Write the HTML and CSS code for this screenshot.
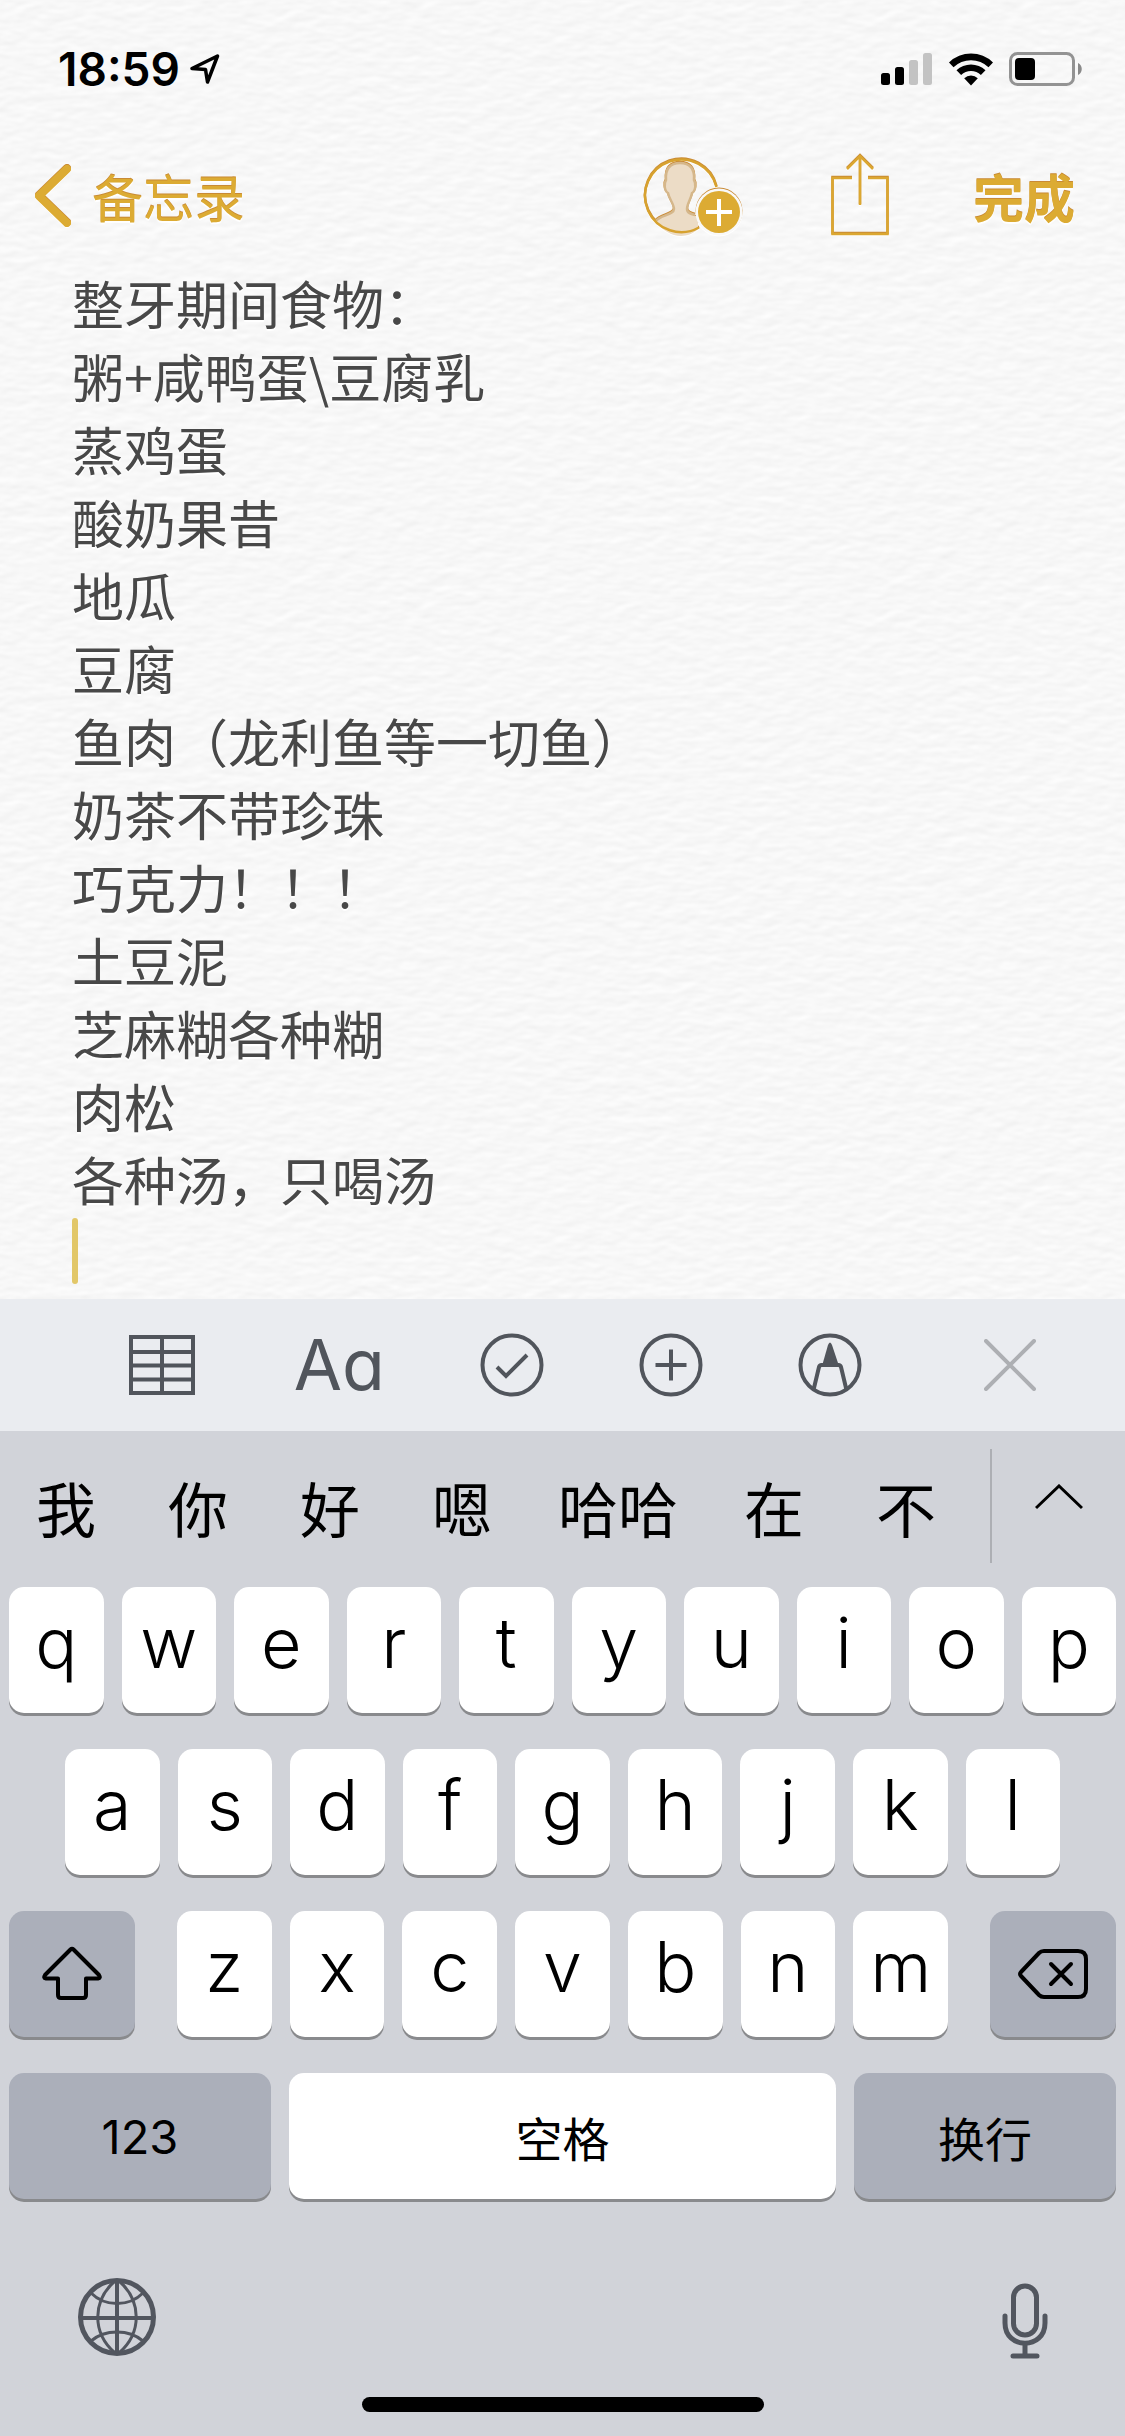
FILE: index.html
```html
<!DOCTYPE html>
<html lang="zh-CN">
<head>
    <meta charset="UTF-8">
    <meta name="viewport" content="width=device-width, initial-scale=1.0">
    <title>备忘录</title>
    <link rel="stylesheet" href="styles.css">
</head>
<body>
    <div class="screen">
        <main class="paper">
            <div class="status-bar">
                <div class="status-left">
                    <span class="time">18:59</span>
                    <svg class="location" width="30" height="30" viewBox="0 0 30 30" aria-hidden="true">
                        <path d="M2 14.5 27.500 2 17.500 28 15.500 15.500Z" fill="none" stroke="#000" stroke-width="3.500" stroke-linejoin="round"/>
                    </svg>
                </div>
                <div class="status-right">
                    <svg width="52" height="34" viewBox="0 0 52 34" aria-hidden="true">
                        <rect x="0" y="21" width="9" height="12" rx="2.500"/>
                        <rect x="14" y="15" width="9" height="18" rx="2.500"/>
                        <rect x="28" y="8" width="9" height="25" rx="2.500" fill="#c3c3c3"/>
                        <rect x="42" y="1" width="9" height="32" rx="2.500" fill="#c3c3c3"/>
                    </svg>
                    <svg width="46" height="34" viewBox="0 0 46 34" aria-hidden="true">
                        <path d="M1 10.500a31.500 31.500 0 0 1 44 0l-4.500 4.800a25 25 0 0 0-35 0z"/>
                        <path d="M8.500 18.300a21 21 0 0 1 29 0l-4.600 4.700a14.500 14.500 0 0 0-19.800 0z"/>
                        <path d="M16.200 26.200a10 10 0 0 1 13.600 0L23 33.500z"/>
                    </svg>
                    <svg width="74" height="34" viewBox="0 0 74 34" aria-hidden="true">
                        <rect x="1.500" y="1.500" width="63" height="31" rx="7" fill="none" stroke="#939393" stroke-width="3"/>
                        <rect x="6" y="6" width="20" height="22" rx="4"/>
                        <path d="M69 11c5 2 5 10 0 12z" fill="#8a8a8a"/>
                    </svg>
                </div>
            </div>

            <header class="nav-bar">
                <a class="back-link" href="#">
                    <svg class="gold-icon" width="38" height="64" viewBox="0 0 38 64" aria-hidden="true">
                        <path d="M33 5 5 32l28 27" fill="none" stroke="#dcab33" stroke-width="8" stroke-linecap="round" stroke-linejoin="round"/>
                    </svg>
                    备忘录
                </a>
                <div class="nav-actions">
                    <button class="icon-button" type="button" aria-label="添加成员">
                        <svg class="gold-icon" width="104" height="84" viewBox="0 0 104 84" aria-hidden="true">
                            <path d="M13 67c4-6 18-6 18-12 0-5-5-10-6-16-4-2-4-10-2-13-1-11 4-17 14-17s15 6 14 17c2 3 2 11-2 13-1 6-5 11-5 16 0 6 8 6 11 8v12c-12 12-32 8-42-8z" fill="#ecdcc6"/>
                            <path d="M13 67c4-6 18-6 18-12 0-5-5-10-6-16-4-2-4-10-2-13-1-11 4-17 14-17s15 6 14 17c2 3 2 11-2 13-1 6-5 11-5 16 0 4 4 5 8 6" fill="none" stroke="#d5b78b" stroke-width="2.500"/>
                            <path d="M73.500 33A36.300 36.300 0 1 0 56 73.500" fill="none" stroke="#d7a22f" stroke-width="2.500"/>
                            <circle cx="76" cy="58" r="23.500" fill="#f9f9f9"/>
                            <circle cx="76" cy="58" r="21" fill="#dcab33"/>
                            <path d="M63 58h26M76 45v27" stroke="#fff" stroke-width="4"/>
                        </svg>
                    </button>
                    <button class="icon-button" type="button" aria-label="共享">
                        <svg class="gold-icon" width="58" height="84" viewBox="0 0 58 84" aria-hidden="true">
                            <path d="M21 24H1.500v56h55V24H37M29 2v49M16 15 29 2l13 13" fill="none" stroke="#dba731" stroke-width="2.500"/>
                        </svg>
                    </button>
                    <button class="done-button" type="button">完成</button>
                </div>
            </header>

            <textarea class="note-text" rows="13" aria-label="备忘录正文" spellcheck="false">整牙期间食物：
粥+咸鸭蛋\豆腐乳
蒸鸡蛋
酸奶果昔
地瓜
豆腐
鱼肉（龙利鱼等一切鱼）
奶茶不带珍珠
巧克力！！！
土豆泥
芝麻糊各种糊
肉松
各种汤，只喝汤</textarea>
            <div class="caret"></div>
        </main>

        <div class="toolbar">
            <div class="tools">
                <button class="icon-button" type="button" aria-label="表格">
                    <svg width="66" height="60" viewBox="0 0 66 60" fill="none" stroke="#51555c" stroke-width="4" aria-hidden="true">
                        <path d="M2 2h62v56H2zM33 2v56M2 17h62M2 30.500h62M2 44.500h62"/>
                    </svg>
                </button>
                <button class="format-button" type="button" aria-label="格式">Aa</button>
                <button class="icon-button" type="button" aria-label="核对清单">
                    <svg width="64" height="64" viewBox="0 0 64 64" fill="none" stroke="#51555c" stroke-width="4" aria-hidden="true">
                        <circle cx="32" cy="32" r="29.500"/>
                        <path d="M17 34l9 9 21-21"/>
                    </svg>
                </button>
                <button class="icon-button" type="button" aria-label="添加">
                    <svg width="64" height="64" viewBox="0 0 64 64" fill="none" stroke="#51555c" stroke-width="4" aria-hidden="true">
                        <circle cx="32" cy="32" r="29.500"/>
                        <path d="M16.500 32h31M32 16.500v31"/>
                    </svg>
                </button>
                <button class="icon-button" type="button" aria-label="标记">
                    <svg width="64" height="64" viewBox="0 0 64 64" fill="none" stroke="#51555c" stroke-width="4" aria-hidden="true">
                        <circle cx="32" cy="32" r="29.500"/>
                        <path d="M15.500 57 21 34q.500-2 2.500-2h17q2 0 2.500 2l5.500 23"/>
                        <path d="M24 33l6-21q2-5 4 0l7 21z" fill="#51555c" stroke="none"/>
                    </svg>
                </button>
            </div>
            <button class="icon-button" type="button" aria-label="关闭">
                <svg width="52" height="52" viewBox="0 0 52 52" aria-hidden="true">
                    <path d="M2 2l48 48M50 2 2 50" stroke="#adafb3" stroke-width="4" stroke-linecap="round"/>
                </svg>
            </button>
        </div>

        <div class="keyboard">
            <div class="candidates">
                <button class="candidate" type="button">我</button>
                <button class="candidate" type="button">你</button>
                <button class="candidate" type="button">好</button>
                <button class="candidate" type="button">嗯</button>
                <button class="candidate candidate-wide" type="button">哈哈</button>
                <button class="candidate" type="button">在</button>
                <button class="candidate" type="button">不</button>
                <button class="expand" type="button" aria-label="更多候选">
                    <svg width="48" height="26" viewBox="0 0 48 26" aria-hidden="true">
                        <path d="M1 24 24 2l23 22" fill="none" stroke="#000" stroke-width="3"/>
                    </svg>
                </button>
            </div>

            <div class="keys">
                <div class="key-row">
                    <button class="key" type="button">q</button>
                    <button class="key" type="button">w</button>
                    <button class="key" type="button">e</button>
                    <button class="key" type="button">r</button>
                    <button class="key" type="button">t</button>
                    <button class="key" type="button">y</button>
                    <button class="key" type="button">u</button>
                    <button class="key" type="button">i</button>
                    <button class="key" type="button">o</button>
                    <button class="key" type="button">p</button>
                </div>
                <div class="key-row key-row-inset">
                    <button class="key" type="button">a</button>
                    <button class="key" type="button">s</button>
                    <button class="key" type="button">d</button>
                    <button class="key" type="button">f</button>
                    <button class="key" type="button">g</button>
                    <button class="key" type="button">h</button>
                    <button class="key" type="button">j</button>
                    <button class="key" type="button">k</button>
                    <button class="key" type="button">l</button>
                </div>
                <div class="key-row key-row-shift">
                    <button class="key key-dark key-side" type="button" aria-label="大写">
                        <svg width="60" height="56" viewBox="0 0 60 56" aria-hidden="true">
                            <path d="M28.500 3.500q1.500-1.500 3 0L57 29q2 3-1 3.500H44V49q0 3-3 3H19q-3 0-3-3V32.500H4q-3-.500-1-3.500z" fill="none" stroke="#000" stroke-width="4" stroke-linejoin="round"/>
                        </svg>
                    </button>
                    <div class="key-row key-row-letters">
                        <button class="key" type="button">z</button>
                        <button class="key" type="button">x</button>
                        <button class="key" type="button">c</button>
                        <button class="key" type="button">v</button>
                        <button class="key" type="button">b</button>
                        <button class="key" type="button">n</button>
                        <button class="key" type="button">m</button>
                    </div>
                    <button class="key key-dark key-side" type="button" aria-label="删除">
                        <svg width="70" height="52" viewBox="0 0 70 52" fill="none" stroke="#000" stroke-width="4" stroke-linecap="round" stroke-linejoin="round" aria-hidden="true">
                            <path d="M26 3h34q8 0 8 8v30q0 8-8 8H26q-3 0-5-2L3 28q-2-2 0-4L21 5q2-2 5-2zM33 16l20 20M53 16 33 36"/>
                        </svg>
                    </button>
                </div>
                <div class="key-row">
                    <button class="key key-dark key-word key-wide" type="button">123</button>
                    <button class="key key-word" type="button">空格</button>
                    <button class="key key-dark key-word key-wide" type="button">换行</button>
                </div>
            </div>

            <div class="keyboard-footer">
                <button class="icon-button" type="button" aria-label="切换键盘">
                    <svg width="78" height="80" viewBox="0 0 78 80" fill="none" stroke="#52565f" stroke-width="3" aria-hidden="true">
                        <circle cx="39" cy="40" r="36.500" stroke-width="5"/>
                        <path d="M39 3v74M3 41h72" stroke-width="4"/>
                        <path d="M37 4C14 24 14 56 37 76M41 4c23 20 23 52 0 72M13 16c14 14 38 14 52 0M13 64c14-12 38-12 52 0"/>
                    </svg>
                </button>
                <button class="icon-button" type="button" aria-label="听写">
                    <svg width="46" height="84" viewBox="0 0 46 84" fill="none" stroke="#52565f" stroke-width="5" stroke-linecap="round" aria-hidden="true">
                        <rect x="11.500" y="9" width="23" height="49" rx="11.500"/>
                        <path d="M3 39v7c0 27 40 27 40 0v-7M23 67v11M11 79h24"/>
                    </svg>
                </button>
            </div>
            <div class="home-indicator"></div>
        </div>
    </div>
</body>
</html>
```

FILE: styles.css
```css
* {
    box-sizing: border-box;
}

body {
    margin: 0;
    font-family: Inter, "Noto Sans CJK SC", sans-serif;
    color: #000;
}

button {
    margin: 0;
    padding: 0;
    border: none;
    background: none;
    font-family: inherit;
    color: inherit;
    cursor: pointer;
}

svg {
    display: block;
}

.screen {
    display: flex;
    flex-direction: column;
    min-height: 100vh;
}

/* Paper */
.paper {
    flex: 1;
    background-color: #f7f7f7;
    background-image: url("data:image/svg+xml,%3Csvg xmlns='http://www.w3.org/2000/svg' width='600' height='600'%3E%3Cfilter id='p' x='0' y='0' width='100%25' height='100%25' color-interpolation-filters='sRGB'%3E%3CfeTurbulence type='fractalNoise' baseFrequency='.05 .1' numOctaves='2' seed='4' stitchTiles='stitch'/%3E%3CfeDiffuseLighting surfaceScale='.18' diffuseConstant='1.12' lighting-color='%23fff'%3E%3CfeDistantLight azimuth='250' elevation='60'/%3E%3C/feDiffuseLighting%3E%3C/filter%3E%3Crect width='600' height='600' filter='url(%23p)'/%3E%3C/svg%3E");
}

.status-bar {
    display: flex;
    justify-content: space-between;
    align-items: center;
    height: 132px;
    padding: 6px 42px 0 58px;
}

.status-left {
    display: flex;
    align-items: center;
    gap: 10px;
}

.time {
    font-size: 46px;
    font-weight: 600;
}

.status-right {
    display: flex;
    gap: 15px;
}

.nav-bar {
    display: flex;
    justify-content: space-between;
    align-items: center;
    height: 134px;
    padding: 0 50px 6px 34px;
    color: #dcab33;
    font-size: 51px;
}

.back-link {
    display: flex;
    align-items: center;
    gap: 20px;
    color: inherit;
    font-weight: 400;
    text-decoration: none;
    text-shadow: 0 -1px 0 #c98a35, 0 2px 1px #fff;
}

.gold-icon {
    filter: drop-shadow(0 -1px 0 #c98a35) drop-shadow(0 1px 0 #fff);
}

.nav-actions {
    display: flex;
    align-items: center;
    gap: 84px;
}

.done-button {
    font-size: 51px;
    font-weight: 700;
    text-shadow: 0 -1px 0 #c98a35, 0 2px 1px #fff;
}

.note-text {
    display: block;
    width: 100%;
    margin: 0;
    padding: 0 72px;
    border: none;
    outline: none;
    background: none;
    resize: none;
    overflow: hidden;
    font-family: "Noto Sans CJK SC", sans-serif;
    font-size: 52px;
    font-weight: 400;
    line-height: 73px;
    color: #484848;
    text-shadow: 0 2px 1px #fff;
}

.caret {
    width: 6px;
    height: 66px;
    margin: 3px 72px 15px;
    border-radius: 3px;
    background-color: #e2c768;
}

/* Format toolbar */
.toolbar {
    display: flex;
    justify-content: space-between;
    align-items: center;
    height: 132px;
    padding: 0 89px 0 129px;
    background-color: #eaecf0;
}

.tools {
    display: flex;
    align-items: center;
    gap: 95px;
}

.format-button {
    width: 95px;
    font-size: 70px;
    line-height: 72px;
    text-align: right;
    color: #51555c;
    font-feature-settings: "cv11";
}

/* Keyboard */
.keyboard {
    background-color: #d1d3d9;
}

.candidates {
    display: flex;
    align-items: center;
    height: 150px;
}

.candidate {
    flex: 132;
    font-size: 60px;
    font-weight: 400;
}

.candidate-wide {
    flex: 180;
}

.expand {
    display: flex;
    justify-content: center;
    align-items: center;
    flex: 0 0 135px;
    height: 114px;
    margin-left: 18px;
    border-left: 2px solid #adafb4;
    padding-bottom: 18px;
}

.keys {
    display: flex;
    flex-direction: column;
    gap: 36px;
    padding: 6px 9px 0;
}

.key-row {
    display: flex;
    gap: 18px;
}

.key-row-inset {
    padding: 0 56px;
}

.key-row-shift {
    gap: 42px;
}

.key-row-letters {
    flex: 1;
}

.key {
    display: flex;
    justify-content: center;
    align-items: center;
    flex: 1 1 0;
    min-width: 0;
    height: 126px;
    padding-bottom: 15px;
    border-radius: 15px;
    background-color: #fff;
    box-shadow: 0 3px 0 #898a8d;
    font-size: 70px;
    font-weight: 350;
}

.key-dark {
    background-color: #abafba;
}

.key-side {
    flex: 0 0 126px;
    padding-bottom: 0;
}

.key-word {
    padding-bottom: 0;
    font-size: 47px;
    font-weight: 400;
}

.key-wide {
    flex: 0 0 262px;
}

.keyboard-footer {
    display: flex;
    justify-content: space-between;
    align-items: flex-start;
    padding: 78px 77px 36px 78px;
}

.home-indicator {
    width: 402px;
    height: 15px;
    margin: 0 auto;
    border-radius: 8px;
    background-color: #000;
}

.keyboard::after {
    content: "";
    display: block;
    height: 24px;
}
```
